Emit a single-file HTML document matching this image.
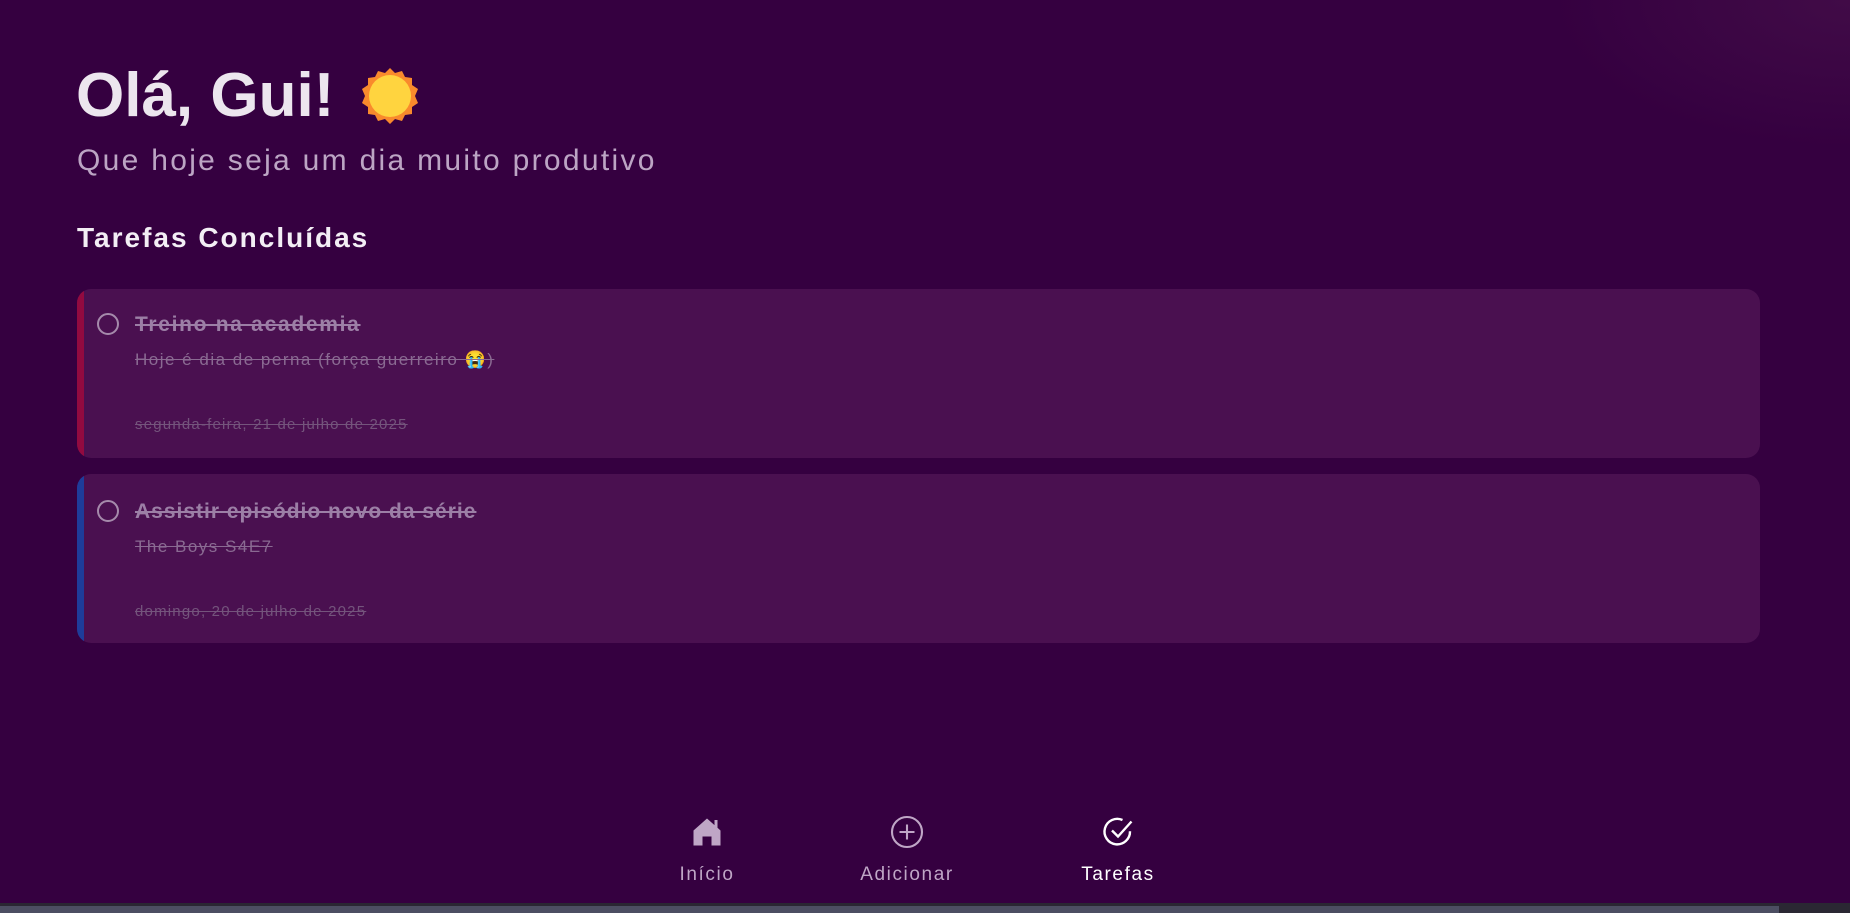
<!DOCTYPE html>
<html><head><meta charset="utf-8"><style>
*{margin:0;padding:0;box-sizing:border-box}
body{width:1850px;height:913px;overflow:hidden;background:#350040;font-family:"Liberation Sans",sans-serif;position:relative}
.glow{position:absolute;right:0;top:0;width:300px;height:150px;background:radial-gradient(ellipse at top right,rgba(80,25,80,.45),rgba(53,0,64,0) 70%)}
.abs{position:absolute;white-space:nowrap}
h1{position:absolute;left:76px;top:60px;font-size:62px;font-weight:bold;color:#ece6ee;letter-spacing:0px}
.sub{left:77px;top:144px;font-size:30px;color:#bca5c4;letter-spacing:2.3px}
.sec{left:77px;top:222px;font-size:28px;font-weight:bold;color:#f3eef5;letter-spacing:2px}
.card{position:absolute;left:77px;width:1683px;height:169px;background:#4a1050;border-radius:14px;overflow:hidden}
.card .bar{position:absolute;left:0;top:0;bottom:0;width:7px}
.circ{position:absolute;left:20px;width:22px;height:22px;border:2px solid #a58aab;border-radius:50%}
.t{position:absolute;left:58px;font-size:21px;font-weight:bold;color:#9c7fa6;text-decoration:line-through;white-space:nowrap}
.d{position:absolute;left:58px;font-size:17px;color:#8a6a92;text-decoration:line-through;white-space:nowrap;letter-spacing:1.5px}
.dt{position:absolute;left:58px;font-size:15px;color:#74547c;text-decoration:line-through;white-space:nowrap;letter-spacing:1.2px}
.nav{position:absolute;top:812px;width:200px;height:80px;text-align:center;font-size:19px;color:#bfa6c6;letter-spacing:1.6px}
.nav svg{position:absolute;left:82px;top:2px}
.nav span{position:absolute;left:0;right:0;top:52px}
.sb{position:absolute;left:0;bottom:0;width:1850px;height:10px;background:#2a2733}
.sb div{position:absolute;left:0;top:3px;width:1779px;height:7px;background:#4c4e62}
</style></head><body>
<div class="glow"></div>
<h1>Olá, Gui!</h1>
<svg class="abs" style="left:361px;top:67px" width="58" height="58" viewBox="0 0 58 58">
<polygon fill="#f98a2c" points="29,1 34,6 41,4 44,10 51,11 51,18 57,22 54,29 57,36 51,40 51,47 44,48 41,54 34,52 29,57 24,52 17,54 14,48 7,47 7,40 1,36 4,29 1,22 7,18 7,11 14,10 17,4 24,6"/>
<circle cx="29" cy="29" r="21" fill="#ffd43f"/></svg>
<div class="abs sub">Que hoje seja um dia muito produtivo</div>
<div class="abs sec">Tarefas Concluídas</div>

<div class="card" style="top:289px"><div class="bar" style="background:#920a40"></div>
<div class="circ" style="top:24px"></div>
<div class="t" style="top:24px;letter-spacing:1.7px">Treino na academia</div>
<div class="d" style="top:61px">Hoje é dia de perna (força guerreiro 😭)</div>
<div class="dt" style="top:127px">segunda-feira, 21 de julho de 2025</div></div>

<div class="card" style="top:474px"><div class="bar" style="background:#1e3c9a"></div>
<div class="circ" style="top:26px"></div>
<div class="t" style="top:26px;letter-spacing:1px">Assistir episódio novo da série</div>
<div class="d" style="top:63px">The Boys S4E7</div>
<div class="dt" style="top:129px">domingo, 20 de julho de 2025</div></div>

<div class="nav" style="left:607px"><svg width="36" height="36" viewBox="0 0 24 24"><path fill="#bfa6c6" d="M12 3 3 11v10h6v-6h6v6h6V11l-2-1.8V4h-2v3.4z"/></svg><span>Início</span></div>
<div class="nav" style="left:807px"><svg width="36" height="36" viewBox="0 0 24 24" fill="none" stroke="#bfa6c6" stroke-width="1.4"><circle cx="12" cy="12" r="10"/><path d="M12 7v10M7 12h10"/></svg><span>Adicionar</span></div>
<div class="nav" style="left:1018px;color:#fff"><svg width="36" height="36" viewBox="0 0 24 24" fill="none" stroke="#fff" stroke-width="1.6"><path d="M20 11.5A8.5 8.5 0 1 1 15 4"/><path d="M8 11l4 4 9-10"/></svg><span>Tarefas</span></div>
<div class="sb"><div></div></div>
</body></html>
